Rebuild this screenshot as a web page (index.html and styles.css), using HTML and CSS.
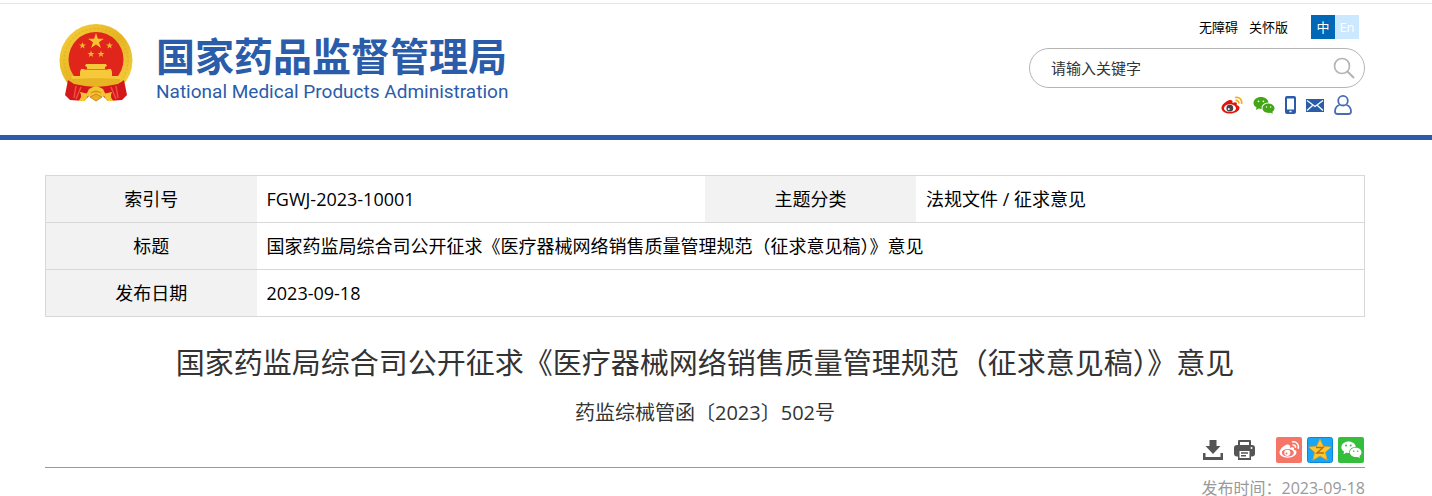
FILE: index.html
```html
<!DOCTYPE html>
<html lang="zh-CN">
<head>
<meta charset="utf-8">
<title>国家药品监督管理局</title>
<link rel="stylesheet" href="styles.css">
</head>
<body>
<header class="site-header">
  <div class="wrap header-row">
    <a class="brand" href="#">
      <svg class="emblem" viewBox="0 0 74 78" aria-hidden="true">
        <defs><linearGradient id="gold" x1="0" y1="0" x2="1" y2="1"><stop offset="0" stop-color="#f6d03c"/><stop offset=".5" stop-color="#e6b422"/><stop offset="1" stop-color="#f8d648"/></linearGradient></defs>
        <circle cx="37" cy="36.500" r="36.500" fill="url(#gold)"/>
        <circle cx="37" cy="36.500" r="32" fill="none" stroke="#deae24" stroke-width="1" stroke-dasharray="2 2"/>
        <circle cx="37" cy="35.500" r="27.500" fill="#e0251b"/>
        <path d="M37 9l1.900 5.700h6l-4.900 3.600 1.900 5.700-4.900-3.500-4.900 3.500 1.900-5.700-4.900-3.600h6z" fill="#f7c331"/>
        <g fill="#f3b52d"><path id="s" d="M23.500 18l.9 2.500h2.600l-2.100 1.600.8 2.500-2.200-1.500-2.200 1.500.8-2.500-2.100-1.600h2.600z"/><use href="#s" x="27"/><use href="#s" x="8.500" y="8.500"/><use href="#s" x="18.500" y="8.500"/></g>
        <path d="M27 40h20l1 2-2 1v2h6l1 3v4h9l-2 6H14l-2-6h9v-4l1-3h6v-2l-2-1z" fill="#f7c93a"/>
        <path d="M25 45.500h24" stroke="#dc7a1e" stroke-width="1"/>
        <path d="M13 55c14-1 34-1 48 0v8H13z" fill="#e8b322"/>
        <path d="M9 56l6 4 11 2 11 1 11-1 11-2 6-4 3 15-5 5-14 1-5-5-7-2-7 2-5 5-14-1-5-5z" fill="#d3171a"/>
        <path d="M17 62l-2 12M22 63l-5 12M57 62l2 12M52 63l5 12" stroke="#ef5140" stroke-width="1.500"/>
        <path d="M21 68l9 2-4 7h-7c3-2 4-5 2-9zM53 68l-9 2 4 7h7c-3-2-4-5-2-9z" fill="#f5c433"/>
        <path d="M30 65q7-5 14 0l3 6-5 2-5-3-5 3-5-2z" fill="#f5c433"/>
        <path d="M32 69q5-4 10 0M31 73l6-3 6 3-6 4z" stroke="#c98a16" fill="#edae25"/>
      </svg>
      <span class="brand-text">
        <span class="brand-cn">国家药品监督管理局</span>
        <span class="brand-en">National Medical Products Administration</span>
      </span>
    </a>
    <div class="tools">
      <nav class="top-links">
        <a href="#">无障碍</a>
        <a href="#">关怀版</a>
        <span class="lang"><a class="lang-cn" href="#">中</a><a class="lang-en" href="#">En</a></span>
      </nav>
      <form class="search">
        <input class="search-input" type="text" placeholder="请输入关键字" aria-label="请输入关键字">
        <button class="search-btn" type="button" aria-label="搜索">
          <svg width="22" height="22" viewBox="0 0 22 22" fill="none" stroke="#b5b5b5"><circle cx="9" cy="9" r="7.500" stroke-width="1.700"/><path d="M14.500 14.500l6.500 6.500" stroke-width="2.200"/></svg>
        </button>
      </form>
      <nav class="social">
        <a href="#" aria-label="微博"><svg width="22" height="18" viewBox="0 0 22 18"><path d="M8.500 4C5 5 .5 8.800.5 12c0 3.500 4 5.500 8.500 5.500S18.500 15 18.500 12c0-1.800-1.500-2.500-2.800-3 .8-2.400-.8-3.400-4.200-2 .5-2.200-.7-3.500-3-3z" fill="#e2130f"/><ellipse cx="9" cy="12.200" rx="6" ry="3.900" fill="#fff"/><circle cx="8.800" cy="12.200" r="3.400" fill="#444"/><circle cx="7.800" cy="13" r="1" fill="#fff"/><path d="M14 1.500c4-1 7.500 2 6.500 6.500M14.500 4.500c2.200-.3 3.600 1 3.200 3" fill="none" stroke="#eab221" stroke-width="1.700"/></svg></a>
        <a href="#" aria-label="微信"><svg width="22" height="18" viewBox="0 0 22 18"><path d="M8 1c4.200 0 7.300 2.500 7.500 5.600-4.600-.1-7.600 3-6.700 6.500l-3-.5L3 14l.5-2.600C1.500 10.200.5 8.700.5 7 .5 3.600 3.800 1 8 1z" fill="#43a616"/><path d="M15.500 7.500c3.400 0 6 2.100 6 4.700 0 1.500-.8 2.700-2.100 3.600l.4 2-2.300-1c-4.200.6-8-1.500-8-4.600 0-2.600 2.600-4.700 6-4.700z" fill="#43a616"/><g fill="#fff"><circle cx="5.500" cy="5.300" r=".9"/><circle cx="10.400" cy="5.300" r=".9"/><circle cx="13.500" cy="11" r=".7"/><circle cx="17.600" cy="11" r=".7"/></g></svg></a>
        <a href="#" aria-label="手机"><svg width="11" height="18" viewBox="0 0 11 18"><rect width="11" height="18" rx="2" fill="#2a5caa"/><path d="M2 2.500h7v11H2z" fill="#fff"/><path d="M4.500 15.500h2" stroke="#fff" stroke-width="1.500"/></svg></a>
        <a href="#" aria-label="邮箱"><svg width="18" height="13" viewBox="0 0 18 13"><path d="M0 0h18v13H0z" fill="#2a5caa"/><path d="M1 1.500l8 6 8-6M1 11.500l5.500-5M17 11.500l-5.500-5" fill="none" stroke="#fff" stroke-width="1.300"/></svg></a>
        <a href="#" aria-label="个人中心"><svg width="18" height="20" viewBox="0 0 18 20" fill="none" stroke="#4a6bb3" stroke-width="1.800"><circle cx="9" cy="5.700" r="4.800"/><path d="M5.500 10C2.500 11 1 13.500 1 16.500c0 1.800.7 2.500 2.500 2.500h11c1.800 0 2.500-.7 2.500-2.500 0-3-1.500-5.500-4.500-6.500"/></svg></a>
      </nav>
    </div>
  </div>
</header>
<main class="wrap">
  <table class="meta">
    <colgroup><col class="col-label"><col class="col-value"><col class="col-label"><col class="col-value"></colgroup>
    <tr><th scope="row">索引号</th><td>FGWJ-2023-10001</td><th scope="row">主题分类</th><td>法规文件 / 征求意见</td></tr>
    <tr><th scope="row">标题</th><td colspan="3">国家药监局综合司公开征求《医疗器械网络销售质量管理规范（征求意见稿）》意见</td></tr>
    <tr><th scope="row">发布日期</th><td colspan="3">2023-09-18</td></tr>
  </table>
  <h1 class="title">国家药监局综合司公开征求《医疗器械网络销售质量管理规范（征求意见稿）》意见</h1>
  <p class="doc-no">药监综械管函〔2023〕502号</p>
  <div class="actions">
    <div class="action-group">
      <button type="button" aria-label="下载"><svg width="20" height="20" viewBox="0 0 20 20" fill="#555"><path d="M6.500 0h7v6h4L10 14 2.500 6h4z"/><path d="M0 13h2.500v4h15v-4H20v7H0z"/></svg></button>
      <button type="button" aria-label="打印"><svg width="21" height="20" viewBox="0 0 21 20"><path d="M4 6V1q0-1 1-1h11q1 0 1 1v5" fill="#555"/><path d="M6 2h9v3H6z" fill="#fff"/><rect y="5" width="21" height="11.500" rx="3" fill="#555"/><path d="M4 9.500h13V20H4z" fill="#555"/><path d="M5.500 11h10v7h-10z" fill="#fff"/><path d="M7 13h7M7 15.800h5" stroke="#555" stroke-width="1.400"/><circle cx="17.500" cy="8" r="1" fill="#fff"/></svg></button>
    </div>
    <div class="share-group">
      <a href="#" aria-label="分享到微博"><svg width="26" height="26" viewBox="0 0 26 26"><rect width="26" height="26" rx="2" fill="#f57567"/><path d="M11 7.500c-3 1-7.500 4.500-7.500 8 0 3 3.500 5.200 8.300 5.200s8.700-2.500 8.700-5.400c0-1.600-1.300-2.300-2.600-2.600.8-2.400-.8-3.200-3.900-2 .6-2.200-.7-3.700-3-3.200z" fill="#fff"/><ellipse cx="11.800" cy="15.700" rx="6" ry="3.800" fill="#f57567"/><circle cx="11.300" cy="15.800" r="3.100" fill="#fff"/><circle cx="10.500" cy="16.400" r="1" fill="#f57567"/><path d="M16 5c4.500-.8 7.300 2.300 6.200 6.800M16.500 8c2.200-.3 3.400 1 2.900 2.900" fill="none" stroke="#fff" stroke-width="1.500"/></svg></a>
      <a href="#" aria-label="分享到QQ空间"><svg width="26" height="26" viewBox="0 0 26 26"><rect x=".5" y=".5" width="25" height="25" rx="2" fill="#1aa5f5" stroke="#0a86d8"/><path d="M13 2l3.300 7.200 8 .8-6 5.300 1.900 7.900L13 19l-7.200 4.200 1.900-7.900-6-5.300 8-.8z" fill="#fdc82f" stroke="#e99b16" stroke-width=".7" stroke-linejoin="round"/><path d="M9 10.500h7l-6 5.500h7" fill="none" stroke="#b86d10" stroke-width="1.500"/></svg></a>
      <a href="#" aria-label="分享到微信"><svg width="26" height="26" viewBox="0 0 26 26"><rect width="26" height="26" rx="2" fill="#35bd3c"/><path d="M10.500 4.500c4 0 7 2.400 7.200 5.400-4.400 0-7.200 3-6.300 6.200l-3.200-.4-2.700 1.500.6-2.600C4.400 13.500 3.400 12 3.400 10.400c0-3.300 3-5.900 7.100-5.900z" fill="#fff"/><path d="M17.700 10.800c3.300 0 5.800 2 5.800 4.600 0 1.500-.8 2.700-2 3.500l.4 2.100-2.300-1.100c-4.100.7-7.700-1.500-7.700-4.500 0-2.600 2.500-4.600 5.800-4.600z" fill="#fff"/><g fill="#35bd3c"><circle cx="8" cy="8.600" r="1"/><circle cx="12.700" cy="8.600" r="1"/><circle cx="15.700" cy="14.200" r=".8"/><circle cx="19.700" cy="14.200" r=".8"/></g></svg></a>
    </div>
  </div>
  <p class="pub-date">发布时间：2023-09-18</p>
</main>
</body>
</html>
```

FILE: styles.css
```css
* { box-sizing: border-box; }

body {
  margin: 0;
  background: #fff;
  color: #000;
  font-family: "Open Sans", "Noto Sans CJK SC", sans-serif;
  font-size: 18px;
}

a { color: inherit; text-decoration: none; }
svg { display: block; }

button {
  padding: 0;
  border: 0;
  background: none;
  cursor: pointer;
}

.wrap { padding: 0 67px 0 45px; }

.site-header {
  margin-top: 3px;
  border-top: 1px solid #e6e6e6;
  border-bottom: 5px solid #2a5caa;
}

.header-row {
  display: flex;
  justify-content: space-between;
  align-items: flex-start;
  padding-bottom: 20px;
}

.brand {
  display: flex;
  gap: 23px;
  padding: 20px 0 0 14px;
  color: #2a5caa;
}

.emblem { width: 74px; height: 78px; }

.brand-text {
  display: flex;
  flex-direction: column;
  padding-top: 10px;
  white-space: nowrap;
}

.brand-cn {
  font-size: 39px;
  font-weight: 700;
  line-height: 44px;
}

.brand-en {
  font-family: Roboto, sans-serif;
  font-size: 19px;
  line-height: 28px;
}

.tools {
  width: 336px;
  padding-top: 11px;
}

.top-links {
  display: flex;
  justify-content: flex-end;
  gap: 11px;
  padding-right: 6px;
  font-size: 13px;
  line-height: 24px;
}

.lang {
  display: flex;
  margin-left: 12px;
  color: #fff;
  text-align: center;
}

.lang a { width: 24px; }
.lang-cn { background: #0068b7; }
.lang-en { background: #cce8ff; }

.search {
  display: flex;
  align-items: center;
  height: 40px;
  margin-top: 9px;
  padding: 0 9px 0 21px;
  border: 1px solid #b5b5b5;
  border-radius: 20px;
}

.search-input {
  flex: 1;
  min-width: 0;
  padding: 0;
  border: 0;
  outline: 0;
  background: none;
  font: inherit;
  font-size: 15px;
}

.search-input::placeholder { color: #333; opacity: 1; }

.social {
  display: flex;
  justify-content: flex-end;
  align-items: center;
  gap: 10px;
  padding: 7px 13px 0 0;
}

.meta {
  width: 100%;
  margin-top: 35px;
  border: 1px solid #d8d8d8;
  border-collapse: collapse;
  table-layout: fixed;
}

.col-label { width: 16%; }
.col-value { width: 34%; }
.meta tr { border-bottom: 1px solid #d8d8d8; }

.meta th,
.meta td {
  height: 47px;
  padding: 0 10px;
  font-weight: 400;
  line-height: 28px;
  text-align: left;
}

.meta th { background: #f2f2f2; text-align: center; }

.title {
  margin: 26px 0 0;
  color: #333;
  font-size: 29px;
  font-weight: 400;
  line-height: 40px;
  text-align: center;
}

.doc-no {
  margin: 16px 0 0;
  color: #333;
  font-size: 20px;
  line-height: 28px;
  text-align: center;
}

.actions {
  display: flex;
  justify-content: flex-end;
  align-items: center;
  gap: 21px;
  margin-top: 10px;
  padding: 0 1px 4px 0;
  border-bottom: 1px solid #999;
}

.action-group { display: flex; gap: 11px; }
.share-group { display: flex; gap: 5px; }

.pub-date {
  margin: 0;
  padding-top: 12px;
  color: #999;
  font-size: 16px;
  line-height: 16px;
  text-align: right;
}
```
